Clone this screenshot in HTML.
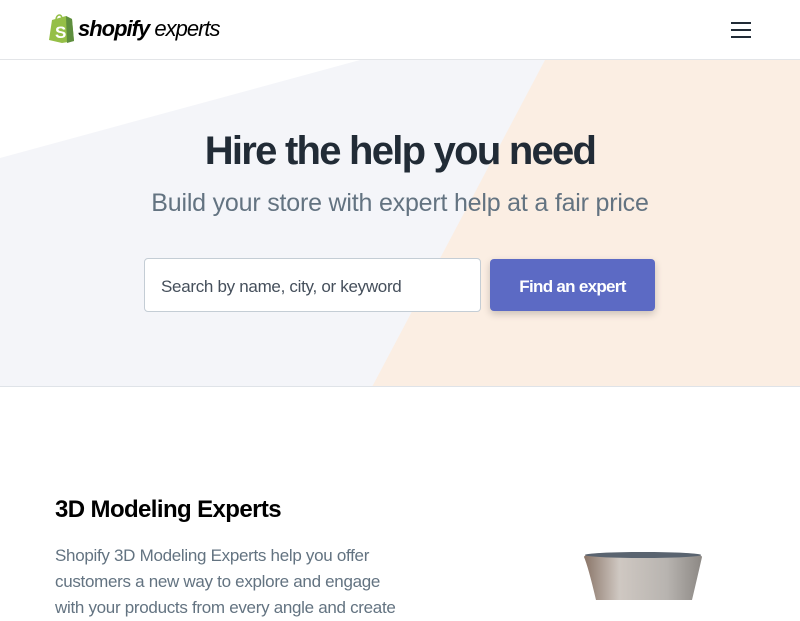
<!DOCTYPE html>
<html><head><meta charset="utf-8"><style>
*{margin:0;padding:0;box-sizing:border-box}
body{width:800px;height:600px;overflow:hidden;background:#fff;font-family:"Liberation Sans",sans-serif;position:relative}
.hdr{position:absolute;top:0;left:0;width:800px;height:60px;border-bottom:1px solid #e3e5e8;background:#fff}
.hero{position:absolute;top:60px;left:0;width:800px;height:327px;background:#f4f5f9;border-bottom:1px solid #dfe3e8;overflow:hidden}
.t{position:absolute;white-space:nowrap}
</style></head><body>
<div class="hdr">
<svg style="position:absolute;left:49px;top:13px" width="26" height="30" viewBox="0 0 26 30"><path d="M3 7 L17 3 L23 6 L25 28 L13 30 L0 27 Z" fill="#95bf47"/><path d="M17 3 L23 6 L25 28 L18 30 Z" fill="#5e8e3e"/><path d="M7 7 C7 1 13 0 13 6" fill="none" stroke="#95bf47" stroke-width="1.5"/><text x="6" y="25" font-family="Liberation Sans" font-weight="bold" font-size="17" fill="#fff">S</text></svg>
<div class="t" style="left:78px;top:16px;font-size:22px;font-style:italic;letter-spacing:-1px;color:#000"><b>shopify</b> <span style="font-weight:normal">experts</span></div>
<div style="position:absolute;left:731px;top:22px;width:20px;height:2px;background:#212b36"></div>
<div style="position:absolute;left:731px;top:29px;width:20px;height:2px;background:#212b36"></div>
<div style="position:absolute;left:731px;top:36px;width:20px;height:2px;background:#212b36"></div>
</div>
<div class="hero">
<svg style="position:absolute;left:0;top:0" width="800" height="327"><polygon points="0,0 360,0 0,98" fill="#fff"/><polygon points="545,0 800,0 800,327 372,327" fill="#fbeee3"/></svg>
<div class="t" style="left:0;width:800px;text-align:center;top:69px;font-size:40px;font-weight:bold;color:#212b36;letter-spacing:-1.75px">Hire the help you need</div>
<div class="t" style="left:0;width:800px;text-align:center;top:129px;font-size:25px;color:#637381;letter-spacing:-0.2px">Build your store with expert help at a fair price</div>
<div style="position:absolute;left:144px;top:198px;width:337px;height:54px;background:#fff;border:1px solid #c4cdd5;border-radius:4px"></div>
<div class="t" style="left:161px;top:217px;font-size:17px;color:#454f5b;letter-spacing:-0.3px">Search by name, city, or keyword</div>
<div style="position:absolute;left:490px;top:199px;width:165px;height:52px;background:#5c6ac4;border-radius:4px;box-shadow:0 3px 8px rgba(0,0,0,.2)"></div>
<div class="t" style="left:490px;width:165px;text-align:center;top:217px;font-size:17px;font-weight:bold;color:#fff;letter-spacing:-0.7px">Find an expert</div>
</div>
<div class="t" style="left:55px;top:496px;font-size:24px;font-weight:bold;color:#000;letter-spacing:-0.6px">3D Modeling Experts</div>
<div class="t" style="left:55px;top:543px;font-size:17px;line-height:26px;color:#637381;letter-spacing:-0.3px">Shopify 3D Modeling Experts help you offer<br>customers a new way to explore and engage<br>with your products from every angle and create</div>
<svg style="position:absolute;left:580px;top:550px" width="126" height="50"><defs><linearGradient id="g" x1="0" x2="1"><stop offset="0" stop-color="#8a7568"/><stop offset=".3" stop-color="#cfc8c2"/><stop offset=".7" stop-color="#b8b4b0"/><stop offset="1" stop-color="#8c8884"/></linearGradient></defs><path d="M4 7 Q4 3 30 3 L96 3 Q122 3 122 7 Q120 16 112 50 L16 50 Q8 16 4 7Z" fill="url(#g)"/><ellipse cx="63" cy="5" rx="58" ry="3" fill="#5a6470"/></svg>
</body></html>
